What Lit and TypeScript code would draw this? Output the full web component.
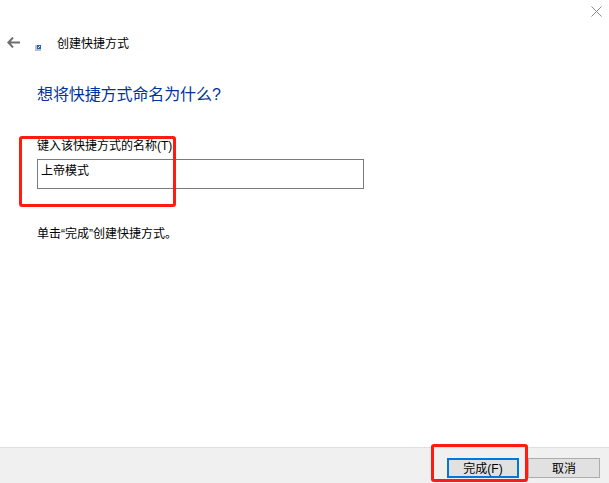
import { LitElement, html, css } from "lit";
import { customElement } from "lit/decorators.js";

@customElement("app-root")
export class AppRoot extends LitElement {
  static styles = css`
    :host {
      display: block;
      width: 609px;
      height: 483px;
      position: relative;
      overflow: hidden;
      background: #fff;
      font-family: "Liberation Sans", "Noto Sans CJK SC", sans-serif;
      font-size: 12px;
      color: #000;
    }
    .window {
      height: 483px;
      display: flex;
      flex-direction: column;
    }
    .close-row {
      height: 34px;
      display: flex;
      justify-content: flex-end;
      padding: 6px 7px 0 0;
      box-sizing: border-box;
    }
    .close { width: 11px; height: 11px; }
    .nav {
      height: 20px;
      display: flex;
      align-items: center;
      padding-left: 7px;
    }
    .back { width: 13px; height: 11px; margin-top: -3px; }
    .small-icon { width: 6px; height: 6px; margin: 7px 0 0 15px; }
    .nav-title { margin-left: 16px; line-height: 20px; }
    .content {
      flex: 1;
      padding: 29px 0 0 37px;
    }
    h1 {
      margin: 0;
      font-size: 16px;
      font-weight: 400;
      line-height: 24px;
      letter-spacing: -0.1px;
      color: #003399;
    }
    .label { margin-top: 31px; line-height: 16px; }
    .field {
      width: 327px;
      height: 30px;
      margin-top: 5px;
      box-sizing: border-box;
      border: 1px solid #7a7a7a;
      padding: 0 3px;
      line-height: 22px;
    }
    .hint { margin-top: 37px; line-height: 16px; }
    .footer {
      height: 36px;
      box-sizing: border-box;
      background: #f0f0f0;
      border-top: 1px solid #dfdfdf;
      display: flex;
      justify-content: flex-end;
      gap: 9px;
      padding: 10px 9px 0 0;
    }
    .btn {
      width: 72px;
      height: 20px;
      box-sizing: border-box;
      border: 1px solid #adadad;
      background: #e1e1e1;
      display: flex;
      align-items: center;
      justify-content: center;
      padding-bottom: 1px;
      font-size: 12px;
    }
    .btn.primary { border: 2px solid #0078d7; }
    .mark {
      position: absolute;
      box-sizing: border-box;
      border: 3px solid #ff1a12;
      border-radius: 3px;
    }
    .mark.a { left: 19px; top: 136px; width: 157px; height: 71px; }
    .mark.b { left: 431px; top: 444px; width: 97px; height: 38px; }
  `;

  render() {
    return html`
      <div class="window">
        <div class="close-row">
          <svg class="close" viewBox="0 0 11 11">
            <path d="M0.5 0.5L10.5 10.5M10.5 0.5L0.5 10.5" stroke="#8a8a8a" stroke-width="1" fill="none" />
          </svg>
        </div>
        <div class="nav">
          <svg class="back" viewBox="0 0 13 11">
            <path d="M6 0.6L1.3 5.5L6 10.4M1.3 5.5H13" stroke="#6e6e6e" stroke-width="2" fill="none" />
          </svg>
          <svg class="small-icon" viewBox="0 0 6 6">
            <rect width="6" height="6" fill="#b9c2d0" />
            <rect x="2" y="0" width="4" height="4" fill="#2a5fae" />
            <path d="M3 3L5 1" stroke="#fff" stroke-width="1" />
          </svg>
          <span class="nav-title">创建快捷方式</span>
        </div>
        <div class="content">
          <h1>想将快捷方式命名为什么?</h1>
          <div class="label">键入该快捷方式的名称(T)</div>
          <div class="field">上帝模式</div>
          <div class="hint">单击“完成”创建快捷方式。</div>
        </div>
        <div class="footer">
          <div class="btn primary">完成(F)</div>
          <div class="btn">取消</div>
        </div>
      </div>
      <div class="mark a"></div>
      <div class="mark b"></div>
    `;
  }
}
